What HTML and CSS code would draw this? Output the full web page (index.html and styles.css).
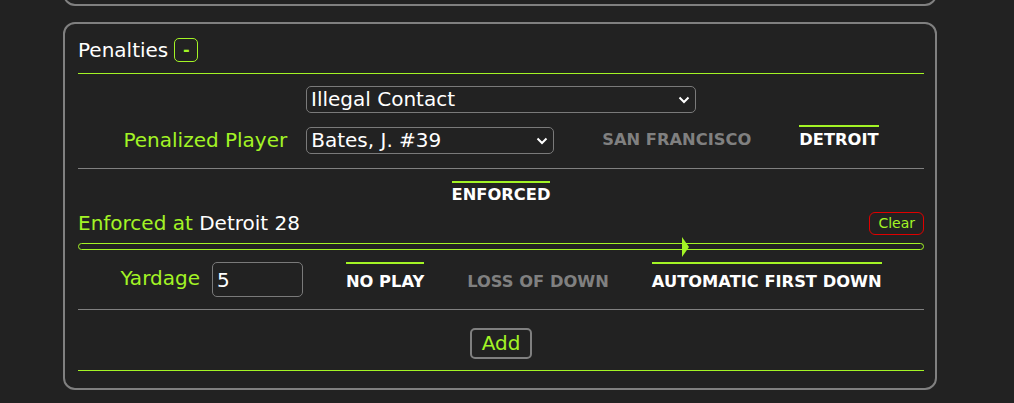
FILE: index.html
```html
<!DOCTYPE html>
<html lang="en">
<head>
<meta charset="utf-8">
<title>Penalties</title>
<link rel="stylesheet" href="styles.css">
</head>
<body>
<div class="panel panel-prev"></div>
<section class="panel">
  <div class="panel-head">
    <span class="title">Penalties</span>
    <button class="toggle">-</button>
  </div>

  <div class="row row-penalty">
    <div class="select-wrap wide">
      <select class="sel"><option>Illegal Contact</option></select>
      <svg class="chev" viewBox="0 0 12 8" width="12" height="8"><path d="M1.5 1.5 L6 6 L10.5 1.5" fill="none" stroke="#fff" stroke-width="2"/></svg>
    </div>
  </div>

  <div class="row row-player">
    <label class="lbl">Penalized Player</label>
    <div class="select-wrap player">
      <select class="sel"><option>Bates, J. #39</option></select>
      <svg class="chev" viewBox="0 0 12 8" width="12" height="8"><path d="M1.5 1.5 L6 6 L10.5 1.5" fill="none" stroke="#fff" stroke-width="2"/></svg>
    </div>
    <span class="tab">SAN FRANCISCO</span>
    <span class="tab active">DETROIT</span>
  </div>

  <div class="divider"></div>

  <div class="row row-enf-tab">
    <span class="tab active">ENFORCED</span>
  </div>

  <div class="enforce-row">
    <span class="enf-text"><span class="green">Enforced at</span> Detroit 28</span>
    <button class="clear">Clear</button>
  </div>

  <div class="track">
    <span class="thumb" style="left:71.5%"><svg viewBox="0 0 7 20" width="7" height="20"><polygon points="0,0 7,10 0,20" fill="#a3f425"/></svg></span>
  </div>

  <div class="row row-yard">
    <label class="lbl">Yardage</label>
    <input class="yard" type="text" value="5">
    <span class="tab active">NO PLAY</span>
    <span class="tab">LOSS OF DOWN</span>
    <span class="tab active">AUTOMATIC FIRST DOWN</span>
  </div>

  <div class="divider"></div>

  <div class="row row-add">
    <button class="add">Add</button>
  </div>

  <div class="green-line"></div>
</section>
</body>
</html>
```
FILE: styles.css
```css
html, body {
  margin: 0;
  padding: 0;
  background: #222222;
}
body {
  font-family: "DejaVu Sans", Verdana, sans-serif;
  font-size: 20px;
  color: #ffffff;
  overflow: hidden;
}
.panel {
  width: 874px;
  box-sizing: border-box;
  margin-left: 63px;
  border: 2px solid #808080;
  border-radius: 12px;
}
.panel-prev {
  height: 40px;
  margin-top: -34px;
}
section.panel {
  margin-top: 16px;
  padding: 14px 11px 17px 13px;
}
.panel-head {
  display: flex;
  align-items: center;
  height: 24px;
  padding-bottom: 11px;
  border-bottom: 1px solid #a3f425;
}
.title {
  font-size: 20px;
  line-height: 24px;
}
.toggle {
  margin-left: 6px;
  width: 24px;
  height: 24px;
  padding: 0;
  background: transparent;
  border: 1px solid #a3f425;
  border-radius: 5px;
  color: #a3f425;
  font-family: "DejaVu Sans", sans-serif;
  font-size: 16px;
  font-weight: bold;
  line-height: 20px;
}
.row {
  display: flex;
  justify-content: center;
  align-items: center;
}
.row-penalty {
  margin-top: 12px;
}
.row-player {
  margin-top: 12px;
}
.lbl {
  color: #a3f425;
  font-size: 20px;
}
.row-player .lbl {
  margin-right: 19px;
}
.select-wrap {
  position: relative;
  display: flex;
}
.select-wrap.wide { width: 390px; }
.select-wrap.player { width: 248px; margin-right: 48px; }
.sel {
  appearance: none;
  -webkit-appearance: none;
  width: 100%;
  height: 27px;
  box-sizing: border-box;
  padding: 0 24px 0 4px;
  background: #222222;
  color: #ffffff;
  border: 1px solid #7a7a7a;
  border-radius: 5px;
  font-family: "DejaVu Sans", sans-serif;
  font-size: 20px;
  line-height: 25px;
}
.chev {
  position: absolute;
  right: 6px;
  top: 10px;
  pointer-events: none;
}
.tab {
  font-family: "DejaVu Sans", sans-serif;
  font-weight: bold;
  font-size: 16.3px;
  line-height: 20px;
  color: #808080;
  border-top: 2px solid transparent;
  padding: 3px 0 5px;
  white-space: nowrap;
}
.tab.active {
  color: #ffffff;
  border-top-color: #a3f425;
}
.row-player .tab + .tab { margin-left: 48px; }
.divider {
  height: 0;
  border-top: 1px solid #808080;
}
.row-player + .divider { margin-top: 13px; }
.row-enf-tab { margin-top: 12px; }
.row-enf-tab .tab { padding: 2px 0 6px; }
.enforce-row {
  display: flex;
  justify-content: space-between;
  align-items: center;
  height: 24px;
}
.green { color: #a3f425; }
.enf-text { line-height: 24px; }
.clear {
  height: 23px;
  box-sizing: border-box;
  padding: 0 8px;
  background: transparent;
  border: 1px solid #e00000;
  border-radius: 6px;
  color: #a3f425;
  font-family: "DejaVu Sans", sans-serif;
  font-size: 14px;
}
.track {
  position: relative;
  margin-top: 8px;
  height: 7px;
  box-sizing: border-box;
  border: 1px solid #a3f425;
  border-radius: 4px;
}
.thumb {
  position: absolute;
  top: -7px;
  width: 7px;
  height: 20px;
  display: block;
}
.thumb svg { display: block; }
.row-yard {
  margin-top: 12px;
  align-items: flex-start;
}
.row-yard .lbl {
  margin-right: 12px;
  line-height: 32px;
}
.yard {
  width: 91px;
  height: 35px;
  box-sizing: border-box;
  padding: 0 4px;
  background: #222222;
  color: #ffffff;
  border: 1px solid #7a7a7a;
  border-radius: 5px;
  font-family: "DejaVu Sans", sans-serif;
  font-size: 20px;
}
.row-yard .tab {
  margin-left: 43px;
  padding: 8px 0 3px;
}
.row-yard + .divider { margin-top: 12px; }
.row-add { margin-top: 18px; }
.add {
  height: 31px;
  box-sizing: border-box;
  padding: 0 10px;
  background: transparent;
  border: 2px solid #808080;
  border-radius: 5px;
  color: #a3f425;
  font-family: "DejaVu Sans", sans-serif;
  font-size: 20px;
  line-height: 27px;
}
.green-line {
  margin-top: 11px;
  border-top: 1px solid #a3f425;
}
```
